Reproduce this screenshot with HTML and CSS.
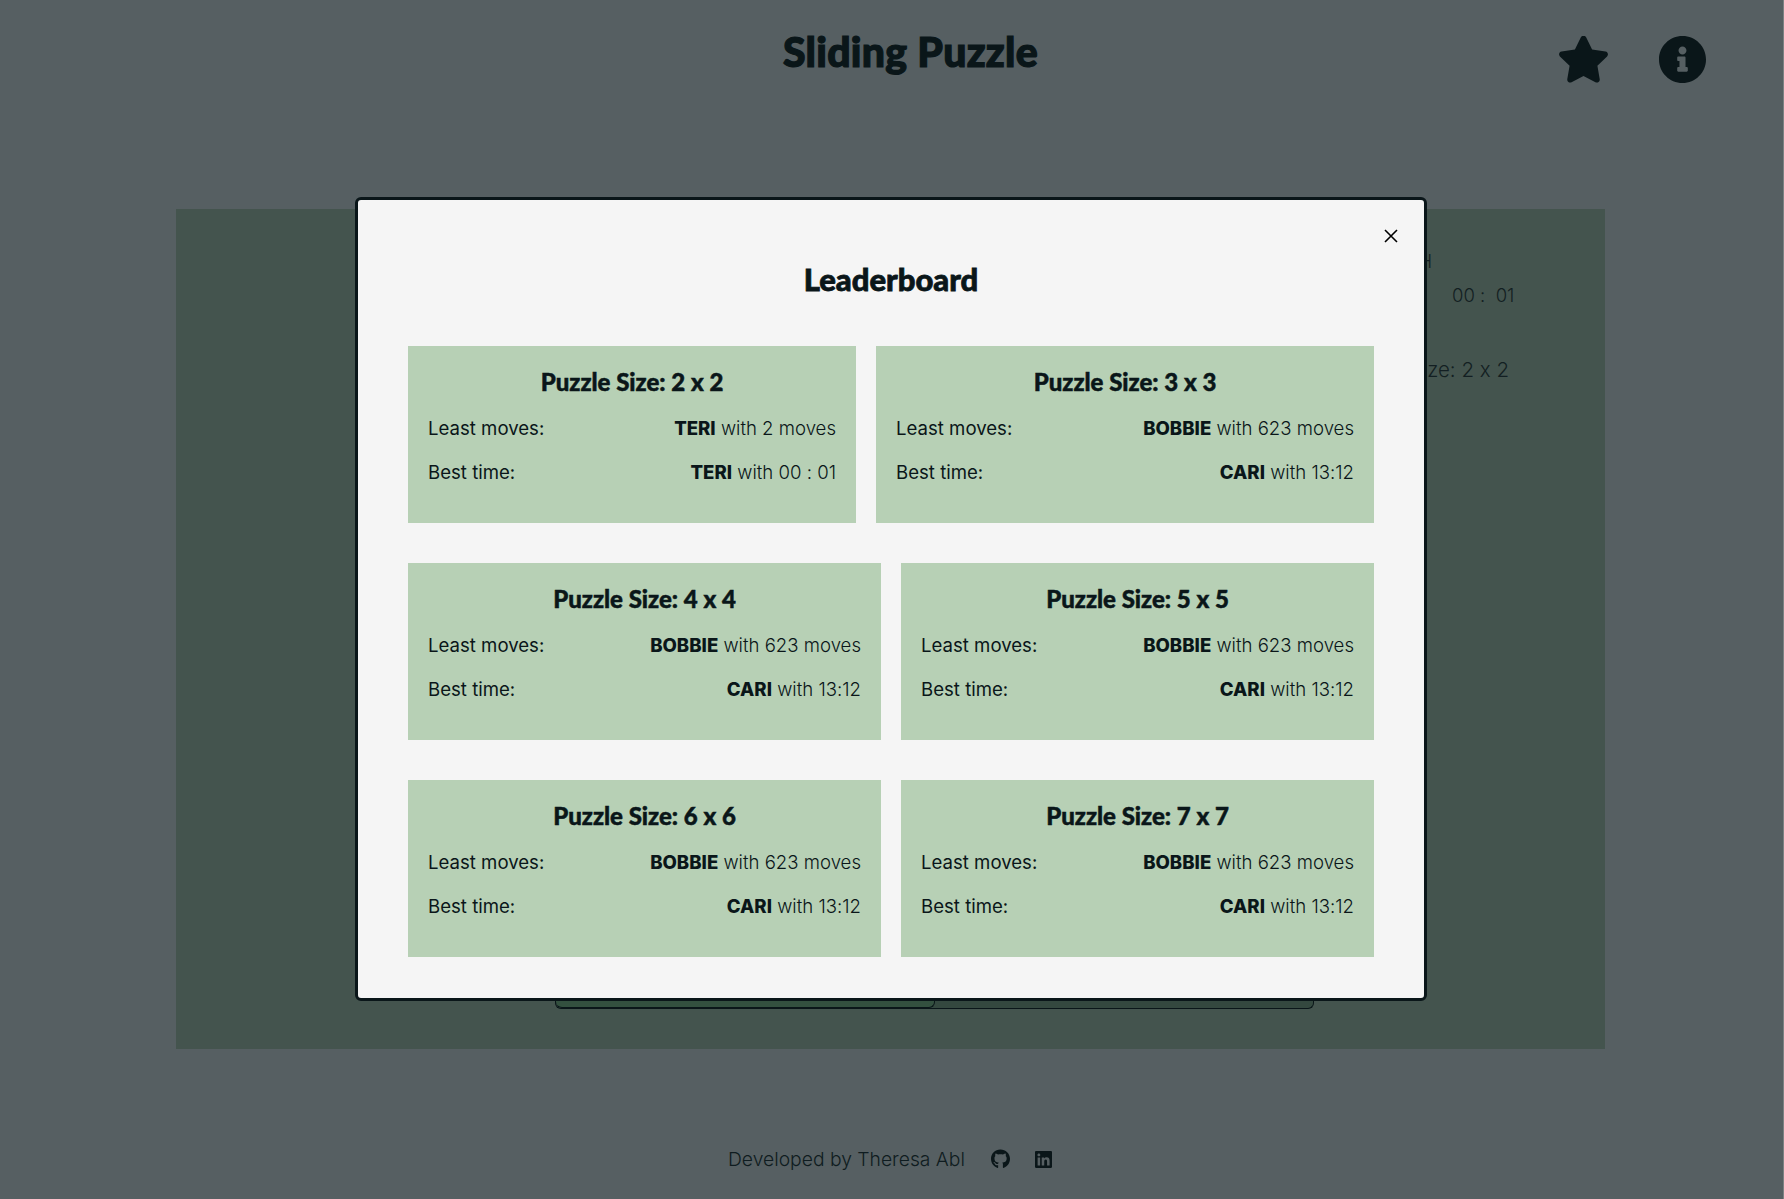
FILE: index.html
```html
<!DOCTYPE html>
<html lang="en">
<head>
    <meta charset="UTF-8">
    <title>Sliding Puzzle</title>
    <link rel="stylesheet" href="styles.css">
</head>
<body>
<header class="top">
    <h1 class="page-title">Sliding Puzzle</h1>
    <div class="top-icons">
        <svg class="icon-star" viewBox="20 8 536 504"><path d="M259.3 17.8L194 150.2 47.9 171.5c-26.2 3.8-36.7 36.1-17.7 54.6l105.7 103-25 145.5c-4.5 26.3 23.2 46 46.4 33.7L288 439.6l130.7 68.7c23.2 12.2 50.9-7.4 46.4-33.7l-25-145.5 105.7-103c19-18.5 8.5-50.8-17.7-54.6L382 150.2 316.7 17.8c-11.7-23.6-45.6-23.9-57.4 0z"/></svg>
        <svg class="icon-info" viewBox="8 8 496 496"><path d="M256 8C119.043 8 8 119.083 8 256c0 136.997 111.043 248 248 248s248-111.003 248-248C504 119.083 392.957 8 256 8zm0 110c23.196 0 42 18.804 42 42s-18.804 42-42 42-42-18.804-42-42 18.804-42 42-42zm56 254c0 6.627-5.373 12-12 12h-88c-6.627 0-12-5.373-12-12v-24c0-6.627 5.373-12 12-12h12v-64h-12c-6.627 0-12-5.373-12-12v-24c0-6.627 5.373-12 12-12h64c6.627 0 12 5.373 12 12v100h12c6.627 0 12 5.373 12 12v24z"/></svg>
    </div>
</header>

<main class="game">
    <div class="game-board">
        <div class="progress"><div class="progress-fill"></div></div>
    </div>
    <div class="game-side">
        <p class="side-label">SWITCH</p>
        <p class="side-time">00 :&nbsp; 01</p>
        <p class="side-size">Puzzle size: 2 x 2</p>
    </div>
</main>

<footer class="foot">
    <span>Developed by Theresa Abl</span>
    <svg class="icon-github" viewBox="0 0 496 512"><path d="M244.8 8C106.1 8 0 113.3 0 252c0 110.9 69.8 205.8 169.5 239.2 12.8 2.3 17.3-5.6 17.3-12.1 0-6.2-.3-40.4-.3-61.4 0 0-70 15-84.7-29.8 0 0-11.4-29.1-27.8-36.6 0 0-22.9-15.7 1.6-15.4 0 0 24.9 2 38.6 25.8 21.9 38.6 58.6 27.5 72.9 20.9 2.3-16 8.8-27.1 16-33.7-55.9-6.2-112.3-14.3-112.3-110.5 0-27.5 7.6-41.3 23.6-58.9-2.6-6.5-11.1-33.3 2.6-67.9 20.9-6.5 69 27 69 27 20-5.6 41.5-8.5 62.8-8.5s42.8 2.9 62.8 8.5c0 0 48.1-33.6 69-27 13.7 34.7 5.2 61.4 2.6 67.9 16 17.7 25.8 31.5 25.8 58.9 0 96.5-58.9 104.2-114.8 110.5 9.2 7.9 17 22.9 17 46.4 0 33.7-.3 75.4-.3 83.6 0 6.5 4.6 14.4 17.3 12.1C428.2 457.8 496 362.9 496 252 496 113.3 383.5 8 244.8 8z"/></svg>
    <svg class="icon-linkedin" viewBox="0 32 448 448"><path d="M416 32H31.9C14.3 32 0 46.5 0 64.3v383.4C0 465.5 14.3 480 31.9 480H416c17.6 0 32-14.5 32-32.3V64.3c0-17.8-14.4-32.3-32-32.3zM135.4 416H69V202.2h66.5V416zm-33.2-243c-21.3 0-38.5-17.3-38.5-38.5S80.9 96 102.2 96c21.2 0 38.5 17.3 38.5 38.5 0 21.3-17.2 38.5-38.5 38.5zm282.1 243h-66.4V312c0-24.8-.5-56.7-34.5-56.7-34.6 0-39.9 27-39.9 54.9V416h-66.4V202.2h63.7v29.2h.9c8.9-16.8 30.6-34.5 62.9-34.5 67.2 0 79.7 44.3 79.7 101.9V416z"/></svg>
</footer>

<div class="modal">
    <svg class="modal-close" viewBox="0 0 14 14"><path d="M1 1l12 12M13 1L1 13"/></svg>
    <h2 class="modal-title">Leaderboard</h2>

    <div class="row">
        <section class="card card-narrow">
            <h3>Puzzle Size: 2 x 2</h3>
            <div class="line"><span>Least moves:</span><span class="score"><b>TERI</b> with 2 moves</span></div>
            <div class="line"><span>Best time:</span><span class="score"><b>TERI</b> with 00 : 01</span></div>
        </section>
        <section class="card">
            <h3>Puzzle Size: 3 x 3</h3>
            <div class="line"><span>Least moves:</span><span class="score"><b>BOBBIE</b> with 623 moves</span></div>
            <div class="line"><span>Best time:</span><span class="score"><b>CARI</b> with 13:12</span></div>
        </section>
    </div>
    <div class="row">
        <section class="card">
            <h3>Puzzle Size: 4 x 4</h3>
            <div class="line"><span>Least moves:</span><span class="score"><b>BOBBIE</b> with 623 moves</span></div>
            <div class="line"><span>Best time:</span><span class="score"><b>CARI</b> with 13:12</span></div>
        </section>
        <section class="card">
            <h3>Puzzle Size: 5 x 5</h3>
            <div class="line"><span>Least moves:</span><span class="score"><b>BOBBIE</b> with 623 moves</span></div>
            <div class="line"><span>Best time:</span><span class="score"><b>CARI</b> with 13:12</span></div>
        </section>
    </div>
    <div class="row">
        <section class="card">
            <h3>Puzzle Size: 6 x 6</h3>
            <div class="line"><span>Least moves:</span><span class="score"><b>BOBBIE</b> with 623 moves</span></div>
            <div class="line"><span>Best time:</span><span class="score"><b>CARI</b> with 13:12</span></div>
        </section>
        <section class="card">
            <h3>Puzzle Size: 7 x 7</h3>
            <div class="line"><span>Least moves:</span><span class="score"><b>BOBBIE</b> with 623 moves</span></div>
            <div class="line"><span>Best time:</span><span class="score"><b>CARI</b> with 13:12</span></div>
        </section>
    </div>
</div>
</body>
</html>
```

FILE: styles.css
```css
*{margin: 0;padding: 0;box-sizing: border-box;}
html,body{height: 1199px;overflow: hidden;}
body{background: #565f62;color: #0a1619;font-family: "Inter", "Noto Sans", sans-serif;font-feature-settings: "calt" 0;display: flex;flex-direction: column;border-right: 1px solid #7c8283;}

/* header */
.top{height: 209px;display: flex;justify-content: space-between;align-items: flex-start;padding: 29px 77px 0 783px;}
.page-title{font-family: "Lato", sans-serif;font-size: 41px;line-height: 46px;font-weight: 900;letter-spacing: .25px;-webkit-text-stroke: 1.2px #0a1619;white-space: nowrap;}
.top-icons{display: flex;gap: 51px;padding-top: 7px;}
.icon-star{width: 49px;height: 47px;fill: #0a1619;}
.icon-info{width: 47px;height: 47px;fill: #0a1619;}

/* game behind the modal */
.game{height: 840px;margin: 0 178px 0 176px;background: #44544e;display: flex;}
.game-board{flex: 1;display: flex;align-items: flex-end;padding: 0 0 40px 379px;}
.progress{width: 759px;height: 20px;border: 1px solid #0a1619;border-top: 0;border-radius: 0 0 6px 6px;background: #34483f;}
.progress-fill{width: 50%;height: 100%;background: #33503f;border-bottom: 1px solid #0a1619;border-right: 1px solid #0a1619;border-radius: 0 0 6px 6px;}
.game-side{width: 181px;color: #131f22;font-size: 20px;font-weight: 300;line-height: 24px;padding-top: 41px;}
.side-label{width: 108px;margin-left: -100px;text-align: right;font-size: 18px;}
.side-time{margin-top: 9px;padding-left: 28px;white-space: nowrap;font-size: 18.5px;}
.side-size{width: 285px;margin-left: -200px;margin-top: 51px;text-align: right;font-size: 20.5px;}

/* footer */
.foot{flex: 1;display: flex;align-items: center;padding: 70px 0 0 728px;font-size: 19.3px;font-weight: 300;color: #0f1c20;}
.icon-github{width: 19px;height: 20px;fill: #0a1619;margin-left: 26px;}
.icon-linkedin{width: 17px;height: 19px;fill: #0a1619;margin-left: 25px;}

/* modal */
.modal{position: absolute;left: 355px;top: 197px;width: 1072px;height: 804px;background: #f5f5f5;border: 3px solid #0a1619;border-radius: 6px;padding: 0 50px;display: flex;flex-direction: column;gap: 40px;}
.modal-close{position: absolute;right: 26px;top: 29px;width: 14px;height: 14px;fill: none;stroke: #000;stroke-width: 1.6;}
.modal-title{font-family: "Lato", sans-serif;font-size: 31px;line-height: 34px;font-weight: 900;text-align: center;-webkit-text-stroke: .8px #0a1619;margin: 62px 0 10px;}
.row{display: flex;gap: 20px;height: 177px;}
.card{flex: 1;background: #b7d0b5;padding: 21px 20px 0;}
.card-narrow{flex: 0 0 448px;}
.card h3{font-family: "Lato", sans-serif;font-size: 24px;line-height: 30px;font-weight: 900;text-align: center;-webkit-text-stroke: .5px #0a1619;margin-bottom: 9px;}
.line{display: flex;justify-content: space-between;font-size: 18.6px;line-height: 44px;}
.score{font-weight: 300;}
.line b{font-weight: 800;}
```
